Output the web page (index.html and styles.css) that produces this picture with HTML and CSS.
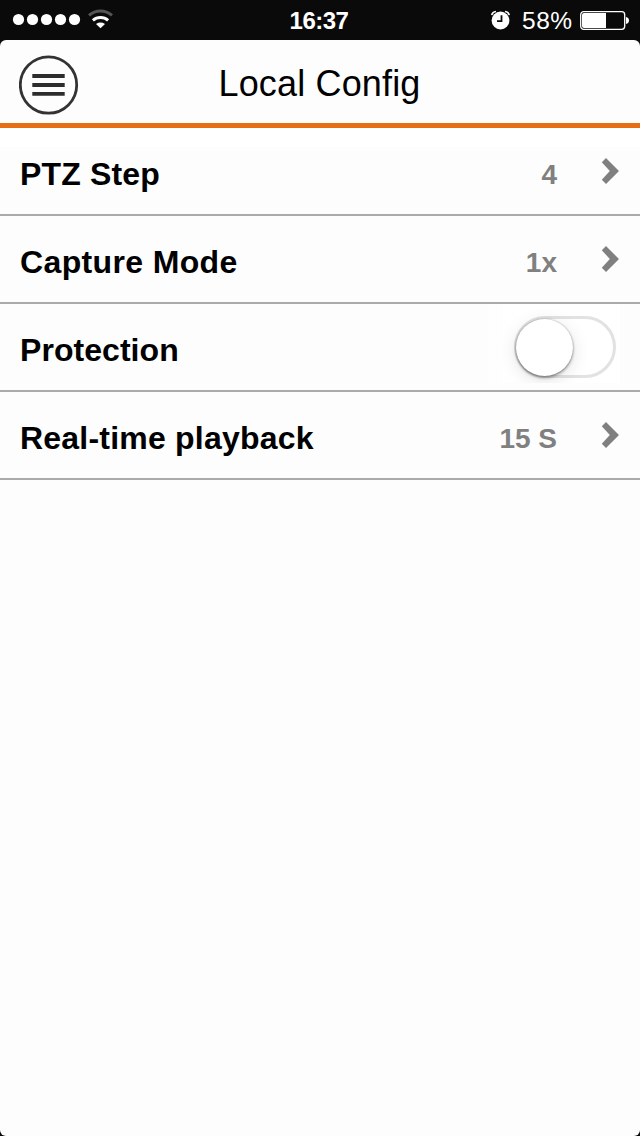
FILE: index.html
```html
<!DOCTYPE html>
<html lang="en">
<head>
<meta charset="utf-8">
<title>Local Config</title>
<link rel="stylesheet" href="styles.css">
</head>
<body>
<div class="status">
  <svg class="signal" width="130" height="40" viewBox="0 0 130 40">
    <g fill="#fff"><circle cx="18.5" cy="19.5" r="5.6"/><circle cx="32.5" cy="19.5" r="5.6"/><circle cx="46.5" cy="19.5" r="5.6"/><circle cx="60.5" cy="19.5" r="5.6"/><circle cx="74.5" cy="19.5" r="5.6"/>
    <path d="M96 24Q100.5 21.200 105 24L100.5 28.300z"/></g>
    <path d="M92.9 20.300a11.500 11.500 0 0 1 15.200 0" fill="none" stroke="#fff" stroke-width="3"/>
    <path d="M89 15.300a17.500 17.500 0 0 1 23 0" fill="none" stroke="#555" stroke-width="3"/>
  </svg>
  <span class="clock">16:37</span>
  <div class="power">
    <svg class="alarm" width="20" height="20" viewBox="0 0 20 20">
      <circle cx="9.5" cy="10.5" r="8.9" fill="#fff"/>
      <path d="M.8 5.2Q1.300 2 5 1.500M14 1.500Q17.700 2 18.200 5.200" fill="none" stroke="#fff" stroke-width="1.700"/>
      <path d="M10.500 5.200V11.200H6" fill="none" stroke="#0a0a0a" stroke-width="1.800"/>
    </svg>
    <span class="percent">58%</span>
    <svg class="battery" width="50" height="20" viewBox="0 0 50 20">
      <rect x=".7" y="1.700" width="44" height="17.600" rx="3" fill="none" stroke="#fff" stroke-width="1.300"/>
      <path d="M4 3h22v15H4a2 2 0 0 1-2-2V5a2 2 0 0 1 2-2z" fill="#fff"/>
      <path d="M46 7q3 .8 3 3.500T46 14z" fill="#fff"/>
    </svg>
  </div>
</div>
<main class="screen">
  <header class="header">
    <svg class="menu" width="60" height="60" viewBox="0 0 60 60">
      <circle cx="29.5" cy="30" r="28.2" fill="none" stroke="#333" stroke-width="2.800"/>
      <path d="M13.300 21h32.400M13.300 30h32.400M13.300 38.800h32.400" stroke="#2d2d2d" stroke-width="3.800"/>
    </svg>
    <h1 class="title">Local Config</h1>
  </header>
  <div class="row first"><span class="label ptz">PTZ Step</span><span class="value">4</span><svg class="chevron" width="20" height="28" viewBox="0 0 20 28"><path d="M6 1L19 14 6 27 1.800 22.800 9.800 14 1.800 5.200z" fill="#808080"/></svg></div>
  <div class="row"><span class="label capture">Capture Mode</span><span class="value">1x</span><svg class="chevron" width="20" height="28" viewBox="0 0 20 28"><path d="M6 1L19 14 6 27 1.800 22.800 9.800 14 1.800 5.200z" fill="#808080"/></svg></div>
  <div class="row"><span class="label protection">Protection</span><div class="patch"><div class="toggle"><div class="knob"></div></div></div></div>
  <div class="row"><span class="label playback">Real-time playback</span><span class="value">15 S</span><svg class="chevron" width="20" height="28" viewBox="0 0 20 28"><path d="M6 1L19 14 6 27 1.800 22.800 9.800 14 1.800 5.200z" fill="#808080"/></svg></div>
</main>
</body>
</html>
```

FILE: styles.css
```css
* { box-sizing: border-box; }
body {
  margin: 0;
  height: 1136px;
  background: #0a0a0a;
  font-family: "Liberation Sans", Arial, sans-serif;
  display: flex;
  flex-direction: column;
  overflow: hidden;
}
svg { display: block; flex: none; }
.status {
  height: 40px;
  display: grid;
  grid-template-columns: 1fr auto 1fr;
  grid-template-rows: 40px;
  color: #fff;
}
.clock { font-size: 24px; font-weight: 700; line-height: 42px; letter-spacing: -.5px; margin-right: 2px; }
.power { display: flex; align-items: flex-start; justify-content: flex-end; padding-right: 10px; }
.alarm { margin-top: 10px; }
.percent { font-size: 24.5px; line-height: 42px; width: 50px; margin: 0 8px 0 11px; letter-spacing: .5px; }
.battery { margin-top: 10px; }
.screen { flex: 1; background: #fdfdfd; border-radius: 6px; overflow: hidden; }
.header {
  height: 88px;
  border-bottom: 5px solid #e76d14;
  display: grid;
  grid-template-columns: 60px 1fr 60px;
  padding: 0 20px 0 19px;
}
.menu { margin-top: 15px; }
.title { margin: 0; font-size: 36px; font-weight: 400; line-height: 88px; text-align: center; color: #000; letter-spacing: .15px; }
.row {
  height: 88px;
  border-bottom: 2px solid #aaa;
  display: flex;
  align-items: flex-start;
  padding: 0 20px;
}
.first { background: linear-gradient(#fff 19px, #fdfdfd 19px); }
.label { flex: 1; font-size: 32px; font-weight: 700; line-height: 92px; color: #000; }
.ptz { letter-spacing: .15px; }
.capture { letter-spacing: .36px; }
.protection { letter-spacing: .05px; }
.playback { letter-spacing: .21px; }
.value { font-size: 28px; font-weight: 700; line-height: 93px; color: #808080; }
.chevron { margin: 29px 0 0 43px; }
.patch { padding: 12px 4px 5px 28px; background: linear-gradient(90deg, #fdfdfd, #fff 28px); height: 79px; overflow: hidden; }
.toggle { width: 102px; height: 62px; border: 3px solid #e2e2e2; border-radius: 31px; background: #fff; }
.knob { width: 57px; height: 57px; margin-left: -1px; border-radius: 50%; background: #fff; box-shadow: 0 2px 3px rgba(0,0,0,.35), 0 0 2px rgba(0,0,0,.3), 0 4px 18px rgba(0,0,0,.12); }
```
